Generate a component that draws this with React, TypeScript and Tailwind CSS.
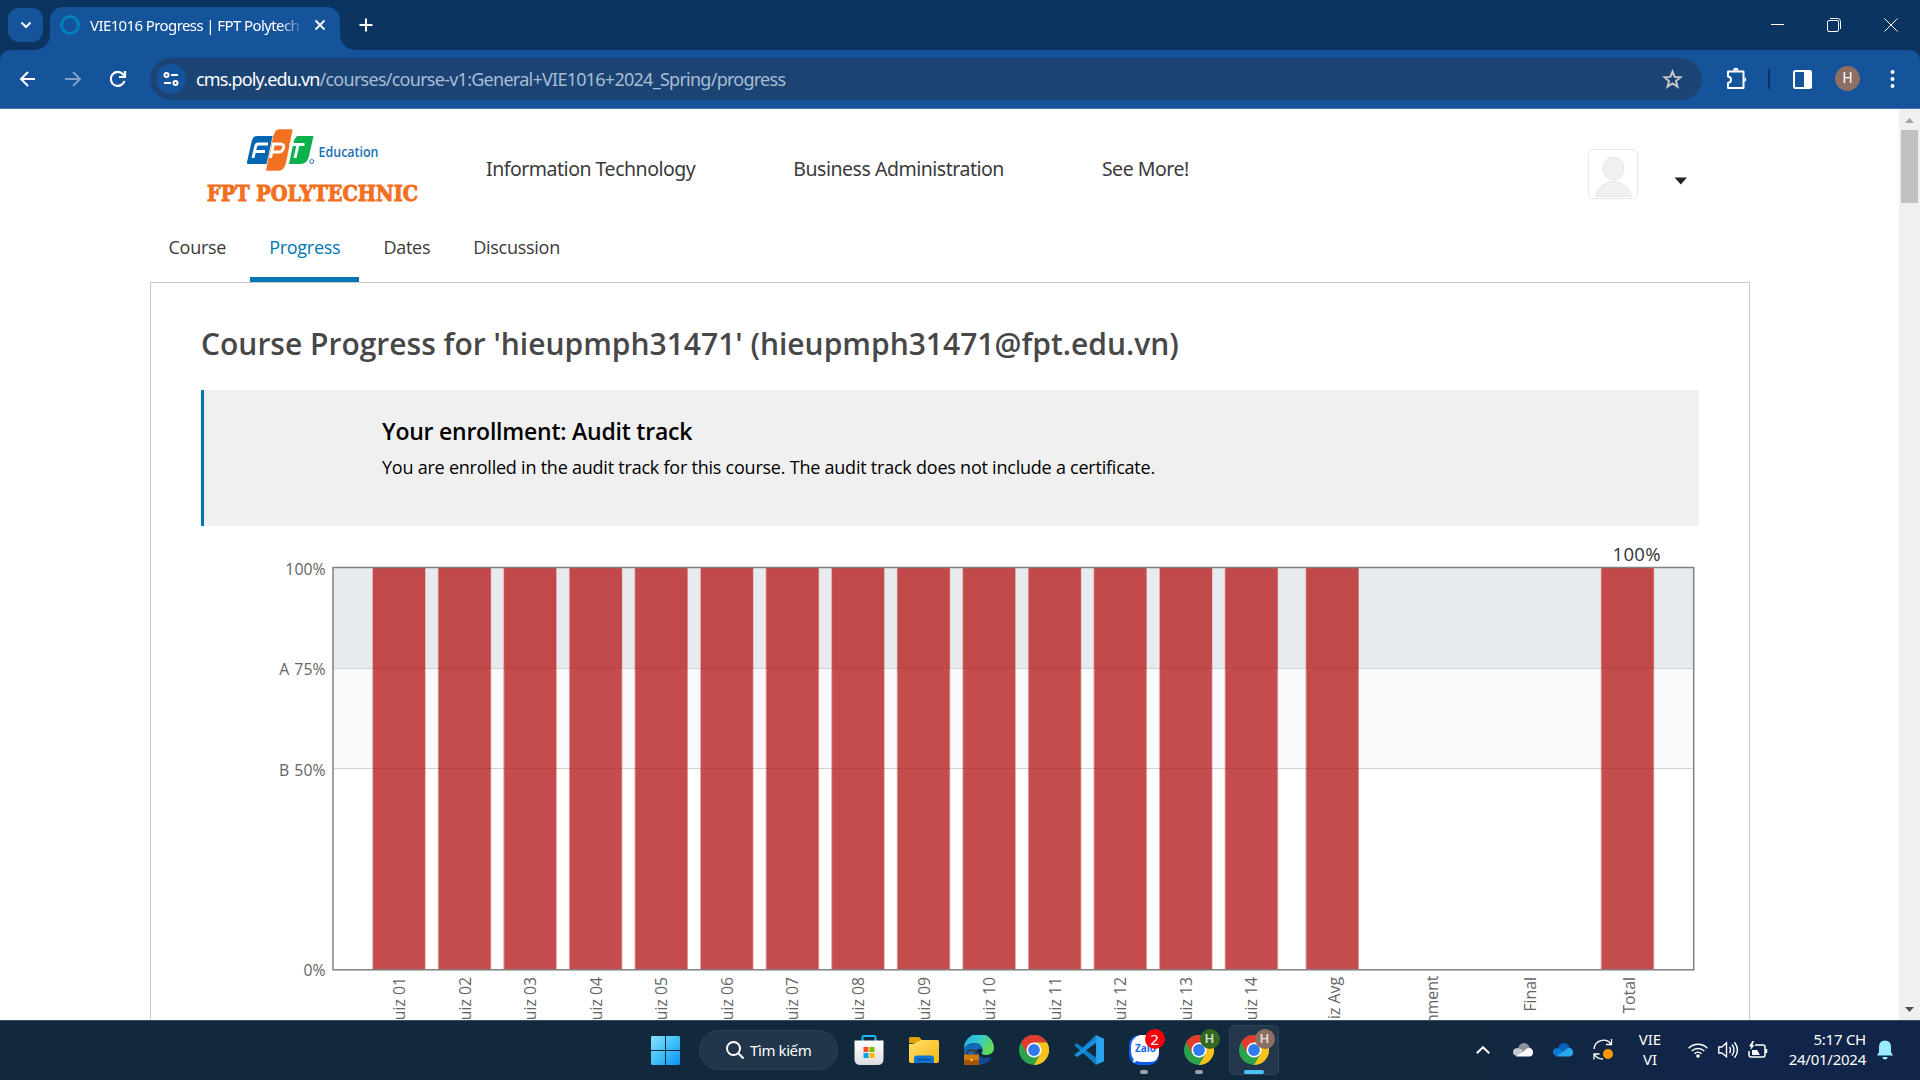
import type { ReactNode } from 'react';

const quizzes = Array.from({ length: 14 }, (_, i) => ({
  x: 372.7 + i * 65.57,
  label: `Quiz ${String(i + 1).padStart(2, '0')}`,
}));
const bars = [...quizzes.map((q) => q.x), 1306, 1601.2];
const axisLabels = [
  ...quizzes.map((q) => ({ x: q.x + 32.3, label: q.label, end: 977 })),
  { x: 1340, label: 'Quiz Avg', end: 977 },
  { x: 1438, label: 'Assignment', end: 975.5 },
  { x: 1536, label: 'Final', end: 977 },
  { x: 1635, label: 'Total', end: 977 },
];

function TabStrip() {
  return (
    <div className="relative flex h-[50px] bg-[#0c3461] font-['Noto_Sans',sans-serif] text-white">
      <div className="ml-2 mt-2 flex h-[34px] w-[35px] items-center justify-center rounded-[11px] bg-[#15539a]">
        <svg width="12" height="8" viewBox="0 0 12 8" fill="none" stroke="white" strokeWidth="2"><path d="M1.5 1.5 6 6l4.500-4.500" /></svg>
      </div>
      <div className="relative ml-[7px] mt-[7px] flex h-[43px] w-[290px] items-start rounded-t-[13px] bg-[#15539a]">
        <svg className="absolute -left-[15px] bottom-0" width="15" height="15"><path d="M15 0v15H0A15 15 0 0 0 15 0Z" fill="#15539a" /></svg>
        <svg className="absolute -right-[15px] bottom-0" width="15" height="15"><path d="M0 0v15h15A15 15 0 0 1 0 0Z" fill="#15539a" /></svg>
        <div className="ml-[10px] mt-2 h-5 w-5 rounded-full border-[3.500px] border-[#0082bd]" />
        <div className="ml-[10px] mt-[7px] w-[210px] overflow-hidden whitespace-nowrap text-[15px] leading-[22px] tracking-[-0.6px] [mask-image:linear-gradient(to_right,black_190px,transparent_214px)]">VIE1016 Progress | FPT Polytech</div>
        <svg className="ml-[14px] mt-[12px]" width="12" height="12" viewBox="0 0 12 12" stroke="white" strokeWidth="1.800"><path d="m1.500 1.500 9 9m0-9-9 9" /></svg>
      </div>
      <svg className="ml-[19px] mt-[18px]" width="14" height="14" viewBox="0 0 14 14" stroke="white" strokeWidth="2"><path d="M7 0.500v13M0.500 7h13" /></svg>
      <div className="ml-auto mr-[22px] mt-[18px] flex gap-[43px]">
        <svg width="14" height="14" stroke="white"><path d="M1 6.500h13" /></svg>
        <svg width="14" height="14" fill="none" stroke="white"><rect x="0.500" y="2.500" width="11" height="11" rx="1.500" /><path d="M3 .5h7.500a3 3 0 0 1 3 3V11" /></svg>
        <svg width="14" height="14" stroke="white"><path d="m.5.5 13 13m0-13-13 13" /></svg>
      </div>
    </div>
  );
}

function Toolbar() {
  return (
    <div className="bg-[#0c3461]">
      <div className="flex h-[59px] items-start rounded-t-[10px] border-b border-[#4376ae] bg-[#15539a] text-white">
        <div className="ml-[19px] mt-[20px] flex gap-[27px]">
          <svg width="18" height="18" viewBox="0 0 18 18" fill="none" stroke="white" strokeWidth="2"><path d="M16 9H2.500M9 2 2 9l7 7" /></svg>
          <svg width="18" height="18" viewBox="0 0 18 18" fill="none" stroke="#7f9fc8" strokeWidth="2"><path d="M1 9h14.500M9 2l7 7-7 7" /></svg>
          <svg width="18" height="18" viewBox="0 0 18 18" fill="none" stroke="white" strokeWidth="2.200"><path d="M15.500 11A7 7 0 1 1 14 4.200L15.800 6M16 1v6h-6" /></svg>
        </div>
        <div className="ml-[23px] mt-2 flex h-[42px] w-[1552px] items-center rounded-full bg-[#1b4474]">
          <div className="ml-[6px] flex h-[30px] w-[30px] items-center justify-center rounded-full bg-[#15539a]">
            <svg width="16" height="14" viewBox="0 0 16 14" fill="none" stroke="white" strokeWidth="2"><circle cx="3.500" cy="3" r="2" /><path d="M8 3h7M1 11h7" /><circle cx="12.500" cy="11" r="2" /></svg>
          </div>
          <div className="ml-[10px] whitespace-nowrap font-['Noto_Sans',sans-serif] text-[18px] leading-6 text-[#a9bcd3]"><span className="tracking-[-0.85px] text-white">cms.poly.edu.vn</span><span className="tracking-[-0.74px]">/courses/course-v1:General+VIE1016+2024_Spring/progress</span></div>
          <svg className="ml-auto mr-[19px]" width="21" height="20" viewBox="0 0 21 20" fill="none" stroke="#c7c7c7" strokeWidth="2"><path d="m10.500 2.500 2.200 5.400 5.800.4-4.500 3.700 1.500 5.700-5-3.200-5 3.200L7 12 2.500 8.300l5.800-.4Z" /></svg>
        </div>
        <svg className="ml-[24px] mt-[17px]" width="22" height="23" viewBox="0 0 22 23" fill="none" stroke="white" strokeWidth="2"><path d="M2 4.500h15.500V21H2v-5c4-.5 4-6 0-6.500Z" strokeLinejoin="round" /><path d="M7 3.500a2.800 2.800 0 0 1 5.600 0ZM18.500 10a2.800 2.800 0 0 1 0 5.200Z" fill="white" stroke="none" /></svg>
        <div className="ml-[20px] mt-[19px] h-[20px] w-[2px] bg-[#0c3461]" />
        <svg className="ml-[23px] mt-[20px]" width="19" height="19" fill="none" stroke="white" strokeWidth="2"><rect x="1" y="1" width="17" height="17" rx="1.500" /><path d="M11 1h7v17h-7Z" fill="white" stroke="none" /></svg>
        <div className="ml-[23px] mt-4 flex h-[25px] w-[25px] items-center justify-center rounded-full bg-[#8d6e63] font-['Roboto'] text-[14px]">H</div>
        <svg className="ml-[30px] mt-[20px]" width="5" height="18" fill="white"><circle cx="2.500" cy="2" r="2" /><circle cx="2.500" cy="9" r="2" /><circle cx="2.500" cy="16" r="2" /></svg>
      </div>
    </div>
  );
}

function Logo() {
  return (
    <svg width="214" height="84" viewBox="206 124 214 84">
      <path d="M257 136h16l-6 28h-19.500q-1-1 0-4l4-18q1.500-6 5.500-6Z" fill="#0066b3" />
      <path d="M297 136h16.500l-4.500 20q-2 8-8 8h-12l5-24Z" fill="#0db14b" />
      <path d="M279 129h14l-6.500 33q-2 9-8 9h-13l7-33q2-9 6.500-9Z" fill="#f37021" stroke="white" strokeWidth=".6" />
      <g fill="none" stroke="white" strokeWidth="2.900">
        <path d="m253 158 2.500-11q.5-3 3-3h9.500M255.500 151.500h9.500" />
        <path d="m270.500 158 3-14h7q4 0 3 4t-4 4h-7" />
        <path d="M289.500 144.500h15M298 145l-3 13" />
      </g>
      <circle cx="311.800" cy="161.500" r="2" fill="none" stroke="#0066b3" strokeWidth=".9" />
      <text x="318.500" y="157" fontFamily="Open Sans" fontSize="15" fontWeight="600" fill="#1a6fb5" textLength="60" lengthAdjust="spacingAndGlyphs">Education</text>
      <text x="207" y="201.300" fontFamily="DejaVu Serif" fontSize="21.500" fontWeight="700" fill="#f37021" stroke="#f37021" strokeWidth="1" textLength="211" lengthAdjust="spacingAndGlyphs">FPT POLYTECHNIC</text>
    </svg>
  );
}

function SiteHeader() {
  return (
    <header className="flex h-[109px] items-start">
      <div className="ml-[206px] mt-[15px]"><Logo /></div>
      <nav className="ml-[66px] mt-[46px] flex gap-[98px] whitespace-nowrap font-['Noto_Sans',sans-serif] text-[19.500px] leading-[28px] tracking-[-0.48px] text-[#3a3a3a]">
        <a>Information Technology</a>
        <a>Business Administration</a>
        <a>See More!</a>
      </nav>
      <div className="ml-auto mr-[211px] mt-[40px] flex">
        <div className="h-[50px] w-[50px] rounded-[5px] border border-[#e7e7e7]">
          <svg width="48" height="48" fill="#f0f0f0" stroke="#e6e6e6"><ellipse cx="24.500" cy="18.500" rx="10.500" ry="11.500" /><path d="M6.500 46.500C9 37 16 31.500 24.500 31.500S40 37 42.500 46.500Z" /></svg>
        </div>
        <svg className="ml-[36px] mt-[28px]" width="14" height="8" fill="#222"><path d="M.5.5h12.500L6.800 7.500Z" /></svg>
      </div>
    </header>
  );
}

function CourseTabs() {
  return (
    <nav className="ml-[149.500px] flex h-[64px] gap-[5px] text-[18px] leading-[58px] tracking-[-0.27px] text-[#3a3a3a]">
      <a className="px-[19px]">Course</a>
      <a className="border-b-[5px] border-[#0075b4] px-[19px] text-[#0075b4]">Progress</a>
      <a className="px-[19px]">Dates</a>
      <a className="px-[19px]">Discussion</a>
    </nav>
  );
}

function GradeChart() {
  return (
    <svg className="-ml-[50px]" width="1598" height="494" viewBox="151 526 1598 494" fontFamily="Open Sans" fontSize="16" fill="#545454">
      <rect x="333" y="567" width="1361" height="101.500" fill="#e7ebee" />
      <rect x="333" y="668.500" width="1361" height="100.500" fill="#f8fafb" />
      <path d="M333 668.500h1361M333 768.500h1361" stroke="#cfd1d4" />
      {bars.map((x) => (
        <g key={x}>
          <rect x={x - 0.5} y="567" width="53.500" height="403" fill="#e3a5a5" />
          <rect x={x + 0.5} y="567" width="51.700" height="403" fill="#c54c4c" />
          <rect x={x + 0.5} y="567" width="51.700" height="101.500" fill="#c14949" />
          <path d={`M${x} 668.500h52.500M${x} 768.500h52.500`} stroke="#b94545" />
        </g>
      ))}
      <rect x="333" y="567.500" width="1360.700" height="402.300" fill="none" stroke="#808080" strokeWidth="1.500" />
      <g textAnchor="end" fontSize="15.800" fill="#646464">
        <text x="325.500" y="575">100%</text>
        <text x="325.500" y="675.300" wordSpacing="1">A 75%</text>
        <text x="325.500" y="776" wordSpacing="1">B 50%</text>
        <text x="325.500" y="976">0%</text>
        {axisLabels.map((a) => <text key={a.label} transform={`translate(${a.x} ${a.end}) rotate(-90)`}>{a.label}</text>)}
      </g>
      <text x="1612.500" y="560.700" fontSize="18.500" fill="#333" textLength="48">100%</text>
    </svg>
  );
}

function Chrome() {
  return (
    <svg width="30" height="30" viewBox="0 0 30 30">
      <circle cx="15" cy="15" r="15" fill="#2ba24c" />
      <path d="M2 7.500A15 15 0 0 1 28 7.500H15L8.500 18.800Z" fill="#e33b2e" />
      <path d="M28 7.500A15 15 0 0 1 15 30l6.500-11.200L15 7.500Z" fill="#fcc21b" />
      <circle cx="15" cy="15" r="7.500" fill="white" />
      <circle cx="15" cy="15" r="5.900" fill="#3079ee" />
    </svg>
  );
}

function Task({ children, badge, badgeClass = '', mark = '', active = false }: { children: ReactNode; badge?: string; badgeClass?: string; mark?: string; active?: boolean }) {
  return (
    <div className="flex w-[55px] justify-center">
      <div className={`relative mt-[5px] flex h-[50px] w-[50px] items-center justify-center rounded-[5px] border ${active ? 'border-[#30445a] bg-[#22374c]' : 'border-transparent'}`}>
        {children}
        {badge && <span className={`absolute left-[25px] top-[3px] flex h-5 w-5 items-center justify-center rounded-full ${badgeClass}`}>{badge}</span>}
        {mark && <span className={`absolute bottom-0 h-1 rounded-full ${mark}`} />}
      </div>
    </div>
  );
}

function Taskbar() {
  return (
    <footer className="flex h-[60px] border-t border-[#3a4e60] bg-linear-to-r from-[#12283c] from-75% to-[#11244a] to-90% font-['Noto_Sans',sans-serif] text-white">
      <svg className="ml-[651px] mt-[15px]" width="29" height="29">
        <defs><linearGradient id="win" x1="0" y1="0" x2="29" y2="29" gradientUnits="userSpaceOnUse"><stop stopColor="#8be0ff" /><stop offset=".5" stopColor="#40c0f8" /><stop offset="1" stopColor="#0a94f5" /></linearGradient></defs>
        <path d="M1 0h13v14H0V1ZM15 0h13l1 1v13H15ZM0 15h14v14H1l-1-1ZM15 15h14v13l-1 1H15Z" fill="url(#win)" />
      </svg>
      <div className="ml-[19px] mt-[9px] flex h-10 w-[139px] items-center rounded-full border border-[#2c4156] bg-[#21364a]">
        <svg className="ml-[26px]" width="18" height="18" fill="none" stroke="white" strokeWidth="2"><circle cx="7.500" cy="7.500" r="6.500" /><path d="m12 12 5.500 5.500" /></svg>
        <span className="ml-[6px] whitespace-nowrap text-[15px] tracking-[-0.4px]">Tìm kiếm</span>
      </div>
      <div className="-mt-px ml-[3px] flex">
        <Task>
          <svg width="30" height="30"><defs><linearGradient id="bag" x2="0" y2="1"><stop stopColor="#fff" /><stop offset="1" stopColor="#ddd" /></linearGradient></defs><path d="M8.500 7V2.500Q8.500 1 10 1H20q1.500 0 1.500 1.500V7" fill="none" stroke="#20b8ee" strokeWidth="2" /><path d="M.5 5.500h29V24q0 6-6 6h-17q-6 0-6-6Z" fill="url(#bag)" /><path d="M9.500 12h5v5h-5Z" fill="#f25022" /><path d="M15.500 12h5v5h-5Z" fill="#7fba00" /><path d="M9.500 18h5v5h-5Z" fill="#00a4ef" /><path d="M15.500 18h5v5h-5Z" fill="#ffb900" /></svg>
        </Task>
        <Task>
          <svg width="30" height="30"><defs><linearGradient id="fold" x2="1" y2="1"><stop stopColor="#ffdf6b" /><stop offset="1" stopColor="#fbb812" /></linearGradient></defs><path d="M0 3.500Q0 2 1.500 2H10l3 3h-2L8 8H0Z" fill="#e0a000" /><path d="M0 9q6 0 9-2.500L11 5h17.500Q30 5 30 6.500V26q0 2-2 2H2q-2 0-2-2Z" fill="url(#fold)" /><path d="M5 28v-5q0-2.500 2.500-2.500h15Q25 20.500 25 23v5Z" fill="#0f75d0" /><path d="M9 24.500h12" stroke="#0a4f9e" strokeWidth="1.500" strokeLinecap="round" /></svg>
        </Task>
        <Task>
          <svg width="30" height="30"><defs><linearGradient id="edge" x2="1" y2=".4"><stop stopColor="#1cb0e8" /><stop offset=".5" stopColor="#36c8d0" /><stop offset="1" stopColor="#62dc5c" /></linearGradient></defs><path d="M0 14A15 15 0 0 1 30 13c0 4-3 7-8 7-3.500 0-5-1-4-2.500C20 14 17 8 10.500 8 5 8 1 11 0 14Z" fill="url(#edge)" /><path d="M0 15C1 11 5 8 10.500 8c4.500 0 7.500 3 7.500 6-5-1.500-7 2-6 6.500L8 28C3 26 0 20 0 15Z" fill="#1269b8" /><path d="M14 15.500c-1 7 8 9 14 6-3 6-8 8.500-14 8-4-3-4-11 0-14Z" fill="#104a96" /><path d="M3.500 20v-3q0-1.500 1.500-1.500h5q1.500 0 1.500 1.500v3" stroke="#4a3018" strokeWidth="1.500" fill="none" /><path d="M0 19.500h15V30H1.500Q0 30 0 28.500Z" fill="#d17a0c" /><path d="M0 25h15v5H1.500Q0 30 0 28.500Z" fill="#a45508" /><circle cx="7.500" cy="25" r="1.200" fill="#ffd34a" /></svg>
        </Task>
        <Task><Chrome /></Task>
        <Task>
          <svg width="30" height="30"><path d="M22 0 8.500 12.500 3 8.300 0 10l19 17 3 3 3-15Z" fill="#0e7fc8" /><path d="M0 20 22 3v7L3 22Z" fill="#1790dc" /><path d="M12 15.300 22 8v14.500Z" fill="#12283c" /><path d="M21.500 0 30 3.700v22.600L21.500 30q.7-1 .7-2V2q0-1-.7-2Z" fill="#29a3ee" /></svg>
        </Task>
        <Task badge="2" badgeClass="bg-[#fb0007] text-[15px]" mark="w-2 bg-[#9aa2ab]">
          <svg width="30" height="30"><rect width="30" height="30" rx="10" fill="#0a5cf0" /><path d="M11 0h9q10 0 10 10v7q0 10-10 10h-7q-3 0-5-1-2 1.500-4.500 1.500Q5 26 4.500 24 2 21 2 16v-5Q2 3 11 0Z" fill="white" /><text x="6" y="17" fontFamily="Open Sans" fontSize="10" fontWeight="700" fill="#1267e8" textLength="21">Zalo</text></svg>
        </Task>
        <Task badge="H" badgeClass="bg-[#33691e] text-[#d5dfd0] text-[13px] font-semibold" mark="w-2 bg-[#9aa2ab]"><Chrome /></Task>
        <Task badge="H" badgeClass="bg-[#8d6e63] text-[#e5dbd8] text-[13px] font-semibold" mark="w-5 bg-[#4cc2ff]" active><Chrome /></Task>
      </div>
      <div className="-mt-px ml-auto flex h-[59px] items-center">
        <svg width="14" height="8" fill="none" stroke="white" strokeWidth="2"><path d="m.8 7.200 6.200-6 6.200 6" /></svg>
        <svg className="ml-[23px]" width="20" height="14"><path d="M5 6Q6 0 11 0q4 0 6 5L6 10Z" fill="#8b929c" /><path d="M4 13Q0 12.500 0 9t4-4q3 0 6 2.500L6 13Z" fill="#c5c8cd" /><path d="M3 13.500 12 7q2-2 4-2 4 0 4 4.500 0 4-4 4Z" fill="#fff" /></svg>
        <svg className="ml-[20px]" width="20" height="14"><path d="M5 6Q6 0 11 0q4 0 6 5L6 10Z" fill="#0a5fb8" /><path d="M4 13Q0 12.500 0 9t4-4q3 0 6 2.500L6 13Z" fill="#0f78d4" /><path d="M3 13.500 12 7q2-2 4-2 4 0 4 4.500 0 4-4 4Z" fill="#28a8ea" /></svg>
        <svg className="ml-[20px]" width="21" height="21" fill="none" stroke="white" strokeWidth="1.300"><path d="M1 10A9.500 9.500 0 0 1 18 5M18.500 0v5.500H13M1 20.500V15h5.500M1.500 15.500q2.500 4.500 8.500 4.500" /><circle cx="15" cy="15" r="5" fill="#ff9800" stroke="none" /></svg>
        <div className="-mt-[2px] ml-[13px] w-[46px] text-center text-[15px] leading-5">VIE<br />VI</div>
        <svg className="ml-[15px]" width="20" height="16" fill="none" stroke="white" strokeWidth="1.500"><path d="M.7 6.200a13.200 13.200 0 0 1 18.600 0M3.700 9a9 9 0 0 1 12.600 0M6.500 11.700a5 5 0 0 1 7 0" /><circle cx="10" cy="14" r="1.800" fill="white" stroke="none" /></svg>
        <svg className="ml-[10px]" width="21" height="18" fill="none" stroke="white" strokeWidth="1.400"><path d="M.8 6h3L8.500 1.800v14L3.800 12h-3ZM11.500 6q2 3 0 6M14 3.500q4 5.500 0 11M16.500 1.200q6 7.800 0 15.600" /></svg>
        <svg className="ml-[9px]" width="21" height="18" fill="none" stroke="white" strokeWidth="1.500"><path d="M7 4h8q2 0 2 2v8q0 2-2 2H3q-2 0-2-2v-4M18.500 8v4" /><path d="M4 14V9h5l3 5ZM4.500 0 1 5.500h2L2.500 9 6.500 4h-2L6 0Z" fill="white" stroke="none" /></svg>
        <div className="-mt-[2px] ml-[17px] w-[80px] whitespace-nowrap text-right text-[15px] leading-5 tracking-[-0.25px]">5:17 CH<br />24/01/2024</div>
        <svg className="ml-[11px] mr-[27px]" width="16" height="20" fill="#99ebff"><path d="M8 .5q6 0 6 6.500v5l2 3.500H0L2 12V7Q2 .5 8 .5ZM5.500 17h5Q10.500 19.500 8 19.500T5.500 17Z" /></svg>
      </div>
    </footer>
  );
}

export default function App() {
  return (
    <div className="flex h-[1080px] w-[1920px] flex-col overflow-hidden bg-white font-['Open_Sans',sans-serif]">
      <TabStrip />
      <Toolbar />
      <div className="flex h-[911px] overflow-hidden">
        <main className="w-[1899px]">
          <SiteHeader />
          <CourseTabs />
          <section className="ml-[150px] h-[750px] w-[1600px] border border-[#c8c8c8] pl-[50px]">
            <h1 className="mt-[41px] h-[66px] whitespace-nowrap text-[30px] font-semibold leading-[40px] text-[#474747]">Course Progress for 'hieupmph31471' (hieupmph31471@fpt.edu.vn)</h1>
            <div className="h-[136px] w-[1498px] border-l-[3px] border-[#0075b4] bg-[#f0f0f0] pl-[178px] pt-[24px] text-black">
              <h2 className="text-[23px] font-semibold leading-[34px] tracking-[-0.23px]">Your enrollment: Audit track</h2>
              <p className="mt-[6px] text-[18px] leading-[26px] tracking-[-0.228px]">You are enrolled in the audit track for this course. The audit track does not include a certificate.</p>
            </div>
            <GradeChart />
          </section>
        </main>
        <div className="flex w-[21px] flex-col items-center bg-[#f0f0f0]">
          <svg className="mt-[9px]" width="9" height="5" fill="#a3a3a3"><path d="M4.500 0 9 5H0Z" /></svg>
          <div className="mt-[7px] h-[73px] w-[17px] bg-[#c1c1c1]" />
          <svg className="mb-[8px] mt-auto" width="9" height="5" fill="#505050"><path d="M0 0h9L4.500 5Z" /></svg>
        </div>
      </div>
      <Taskbar />
    </div>
  );
}
